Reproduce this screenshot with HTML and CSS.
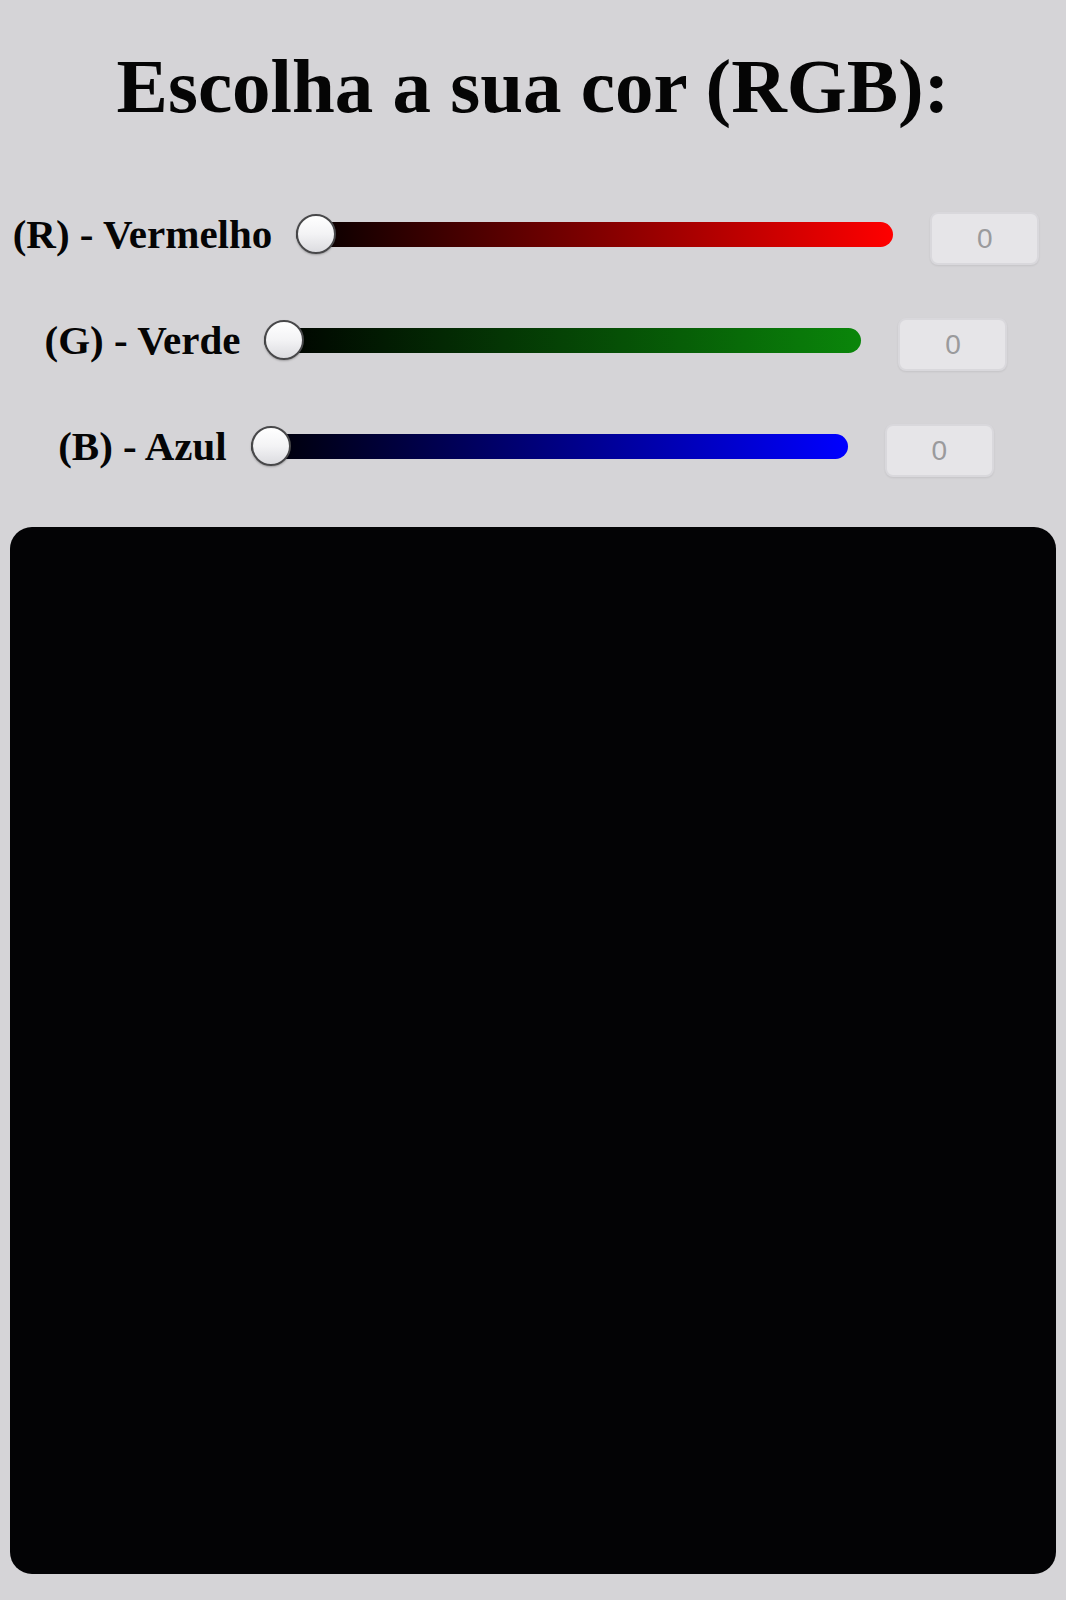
FILE: index.html
```html
<!DOCTYPE html>
<html lang="pt-BR">
<head>
<meta charset="utf-8">
<title>Escolha a sua cor (RGB)</title>
<link rel="stylesheet" href="styles.css">
</head>
<body>
  <h1 class="title">Escolha a sua cor (RGB):</h1>
  <div class="controls">
    <div class="row">
      <label class="label" for="r">(R) - Vermelho</label>
      <input class="slider slider-r" id="r" type="range" min="0" max="255" value="0">
      <input class="value" type="text" value="0" readonly>
    </div>
    <div class="row">
      <label class="label" for="g">(G) - Verde</label>
      <input class="slider slider-g" id="g" type="range" min="0" max="255" value="0">
      <input class="value" type="text" value="0" readonly>
    </div>
    <div class="row">
      <label class="label" for="b">(B) - Azul</label>
      <input class="slider slider-b" id="b" type="range" min="0" max="255" value="0">
      <input class="value" type="text" value="0" readonly>
    </div>
  </div>
  <div class="preview"></div>
</body>
</html>
```
FILE: styles.css
```css
html, body {
  margin: 0;
  padding: 0;
  background: #d5d4d7;
}
body {
  font-family: "Liberation Serif", "Times New Roman", serif;
  color: #050505;
  overflow: hidden;
}
.title {
  margin: 42px 0 0;
  font-size: 77px;
  line-height: 88px;
  font-weight: bold;
  text-align: center;
}
.controls {
  margin-top: 77px;
  padding-right: 14px;
  display: flex;
  flex-direction: column;
  align-items: center;
  gap: 52px;
}
.row {
  display: flex;
  align-items: center;
  height: 54px;
}
.label {
  font-size: 41px;
  font-weight: bold;
  line-height: 42px;
  margin-right: 24px;
  white-space: nowrap;
}
.slider {
  -webkit-appearance: none;
  appearance: none;
  width: 597px;
  height: 40px;
  margin: 0 37px 0 0;
  padding: 0;
  background: transparent;
}
.slider::-webkit-slider-runnable-track {
  height: 25px;
  border-radius: 13px;
}
.slider-r::-webkit-slider-runnable-track {
  background: linear-gradient(to right, #000 0%, #ff0000 100%);
}
.slider-g::-webkit-slider-runnable-track {
  background: linear-gradient(to right, #000 0%, #0a860a 100%);
}
.slider-b::-webkit-slider-runnable-track {
  background: linear-gradient(to right, #000 0%, #0000ff 100%);
}
.slider::-webkit-slider-thumb {
  -webkit-appearance: none;
  appearance: none;
  width: 40px;
  height: 40px;
  margin-top: -7.5px;
  border-radius: 50%;
  box-sizing: border-box;
  border: 2.5px solid #48484a;
  background: linear-gradient(to bottom, #ffffff 0%, #f3f3f5 50%, #dcdce0 100%);
  box-shadow: 0 1px 2px rgba(0, 0, 0, 0.25);
}
.value {
  box-sizing: border-box;
  width: 109px;
  height: 53px;
  margin: 9px 0 0;
  padding: 0;
  border: 2px solid #d9d8dc;
  border-radius: 8px;
  background: #e6e5e8;
  color: #9a9a9c;
  font-family: "Liberation Sans", Arial, sans-serif;
  font-size: 28px;
  text-align: center;
  outline: none;
  box-shadow: 0 1px 2px rgba(0, 0, 0, 0.08);
}
.preview {
  margin: 54px 10px 0;
  height: 1047px;
  border-radius: 22px;
  background: #030305;
}
```
